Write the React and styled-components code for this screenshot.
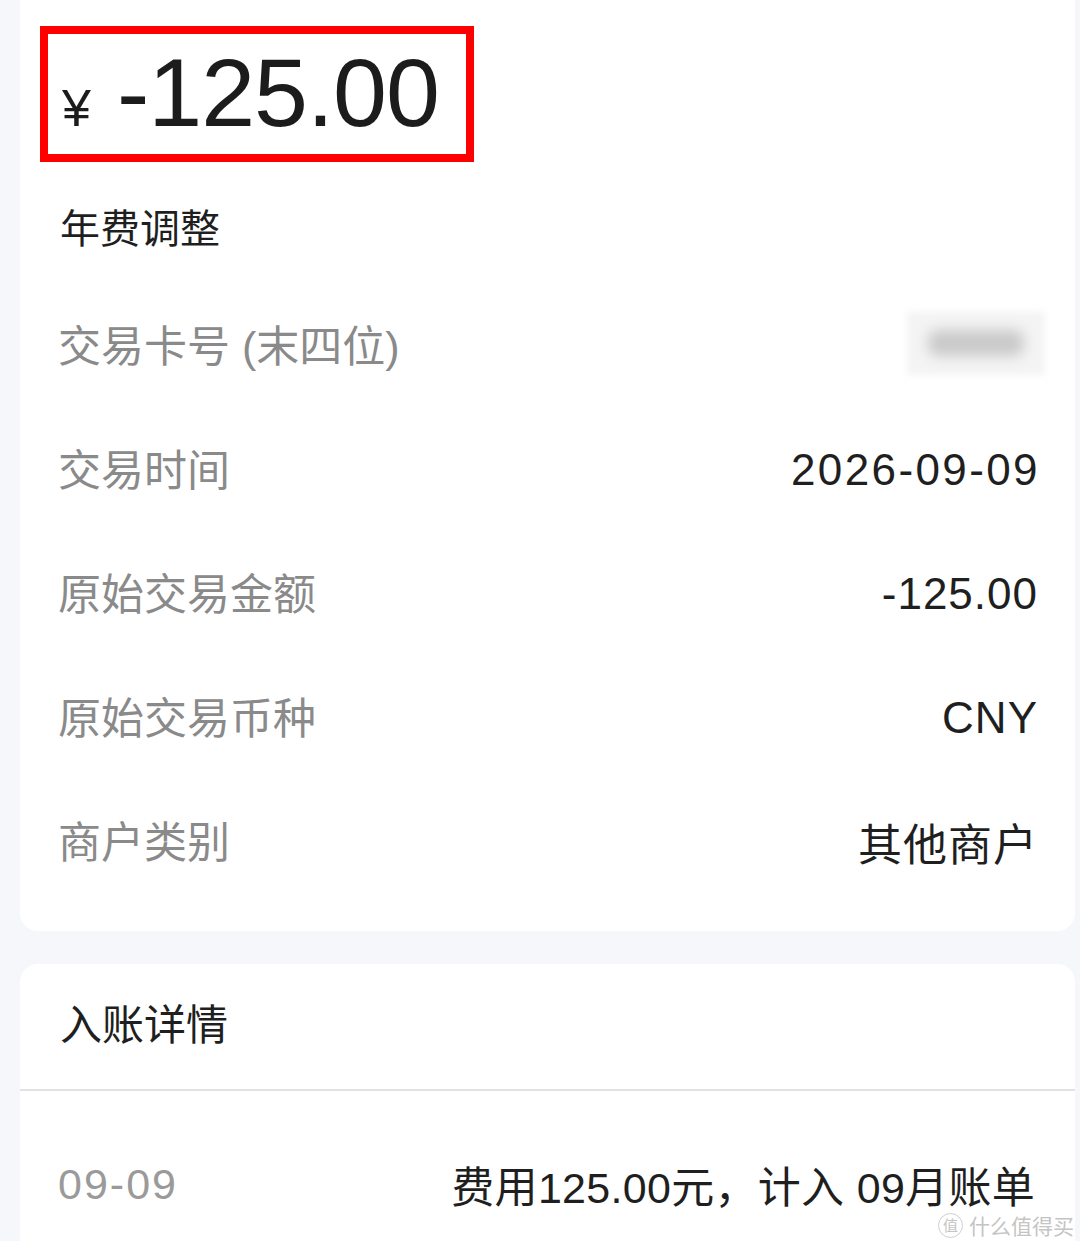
import styled, { createGlobalStyle } from "styled-components";

const GlobalStyle = createGlobalStyle`
  html, body {
    margin: 0;
    padding: 0;
    background: #f6f7fb;
    height: 1241px;
    overflow: hidden;
  }
  body {
    font-family: "Liberation Sans", "Noto Sans CJK SC", sans-serif;
    -webkit-font-smoothing: antialiased;
  }
`;

const details = [
  { label: "交易卡号 (末四位)", value: null },
  { label: "交易时间", value: "2026-09-09", wide: true },
  { label: "原始交易金额", value: "-125.00" },
  { label: "原始交易币种", value: "CNY" },
  { label: "商户类别", value: "其他商户" },
];

const App = () => {
  return (
    <Page>
      <GlobalStyle />
      <Card $top>
        <AmountBox>
          <AmountLine>
            <Yen>¥</Yen>
            <Amount>-125.00</Amount>
          </AmountLine>
        </AmountBox>
        <Title>年费调整</Title>
        <Rows>
          {details.map(({ label, value, wide }) => (
            <Row key={label}>
              <Label>{label}</Label>
              {value ? (
                <Value $wide={wide}>{value}</Value>
              ) : (
                <Masked>
                  <span />
                </Masked>
              )}
            </Row>
          ))}
        </Rows>
      </Card>

      <Card>
        <SectionHead>入账详情</SectionHead>
        <Row $posting>
          <Label $light>09-09</Label>
          <Value $small>费用125.00元，计入 09月账单</Value>
        </Row>
      </Card>

      <Watermark>
        <i>值</i>
        什么值得买
      </Watermark>
    </Page>
  );
};

export default App;

const Page = styled.div`
  position: relative;
  height: 1241px;
  padding: 0 5px 0 20px;
  display: flex;
  flex-direction: column;
  gap: 33px;
  overflow: hidden;
`;

const Card = styled.section`
  background: #ffffff;
  border-radius: ${(p) => (p.$top ? "0 0 18px 18px" : "18px 18px 0 0")};
  padding: ${(p) => (p.$top ? "26px 37px 30px 38px" : "0")};
  flex-shrink: 0;
  ${(p) => !p.$top && "flex: 1;"}
`;

const AmountBox = styled.div`
  box-sizing: border-box;
  width: 434px;
  height: 136px;
  margin-left: -18px;
  border: 8px solid #ff0000;
  padding: 0 0 4px 14px;
  display: flex;
  align-items: center;
  color: #1c1c1c;
`;

const AmountLine = styled.div`
  display: flex;
  align-items: baseline;
  gap: 26px;
  line-height: 1;
`;

const Yen = styled.span`
  font-size: 52px;
`;

const Amount = styled.span`
  font-size: 97px;
  letter-spacing: -1px;
`;

const Title = styled.h2`
  margin: 39px 0 0 2px;
  font-size: 40px;
  font-weight: 400;
  line-height: 56px;
  color: #1f1f1f;
`;

const Rows = styled.div`
  margin-top: 24px;
  display: flex;
  flex-direction: column;
`;

const Row = styled.div`
  height: 124px;
  display: flex;
  align-items: center;
  justify-content: space-between;
  ${(p) =>
    p.$posting &&
    `
    height: auto;
    padding: 62px 40px 0 38px;
  `}
`;

const Label = styled.span`
  font-size: 43px;
  color: ${(p) => (p.$light ? "#9a9a9a" : "#8a8a8a")};
  ${(p) => p.$light && "letter-spacing: 2px;"}
`;

const Value = styled.span`
  font-size: ${(p) => (p.$small ? "43px" : "44px")};
  color: #1f1f1f;
  padding-top: ${(p) => (p.$small ? "0" : "6px")};
  letter-spacing: ${(p) => (p.$small ? "0.3px" : p.$wide ? "2.4px" : "1px")};
  ${(p) => p.$wide && "margin-right: -2px;"}
`;

const Masked = styled.div`
  width: 138px;
  height: 63px;
  margin-right: -7px;
  display: flex;
  align-items: center;
  justify-content: center;
  background: #f4f4f4;
  filter: blur(3px);

  span {
    width: 96px;
    height: 26px;
    border-radius: 10px;
    background: #c9c9c9;
    filter: blur(6px);
  }
`;

const SectionHead = styled.div`
  height: 127px;
  box-sizing: border-box;
  padding: 36px 0 0 40px;
  font-size: 42px;
  line-height: 52px;
  color: #1f1f1f;
  border-bottom: 2px solid #e2e2e2;
`;

const Watermark = styled.div`
  position: absolute;
  right: 6px;
  bottom: 2px;
  display: flex;
  align-items: center;
  gap: 6px;
  font-family: "Noto Sans CJK SC", sans-serif;
  font-size: 21px;
  line-height: 28px;
  color: #c4c4c4;

  i {
    font-style: normal;
    font-size: 15px;
    width: 23px;
    height: 23px;
    border: 1.5px solid #cfcfcf;
    border-radius: 50%;
    display: flex;
    align-items: center;
    justify-content: center;
  }
`;
